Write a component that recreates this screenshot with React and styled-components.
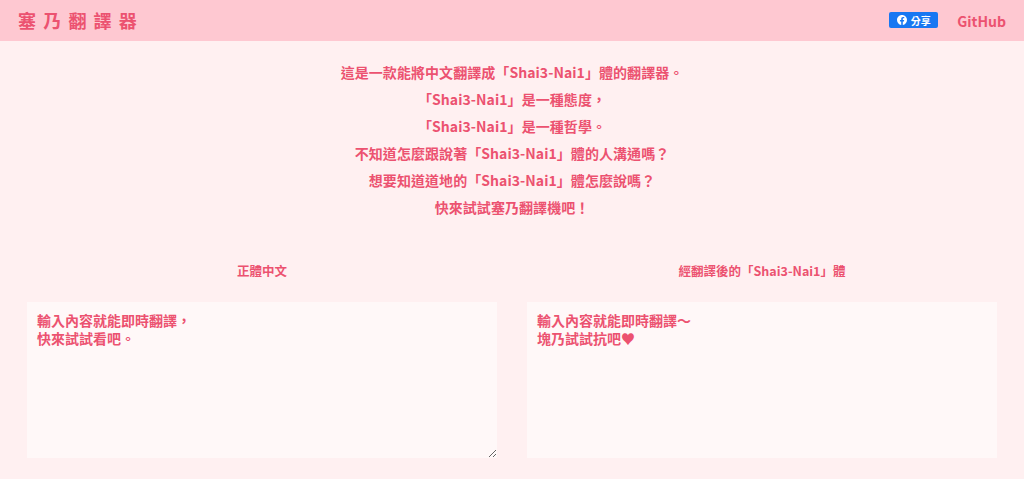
import React from "react";
import styled, { createGlobalStyle } from "styled-components";

const GlobalStyle = createGlobalStyle`
  html, body {
    margin: 0;
    padding: 0;
    background: #fff0f1;
    font-family: "Noto Sans CJK TC", "Noto Sans", sans-serif;
    color: #ec5270;
  }
  * {
    box-sizing: border-box;
  }
`;

const intro = [
  "這是一款能將中文翻譯成「Shai3-Nai1」體的翻譯器。",
  "「Shai3-Nai1」是一種態度，",
  "「Shai3-Nai1」是一種哲學。",
  "不知道怎麼跟說著「Shai3-Nai1」體的人溝通嗎？",
  "想要知道道地的「Shai3-Nai1」體怎麼說嗎？",
  "快來試試塞乃翻譯機吧！",
];

export default function App() {
  return (
    <Page>
      <GlobalStyle />
      <Header>
        <Title>塞乃翻譯器</Title>
        <HeaderRight>
          <ShareButton>
            <svg width="10" height="10" viewBox="0 0 16 16" fill="#fff">
              <path d="M16 8.05C16 3.6 12.42 0 8 0S0 3.6 0 8.05c0 4.02 2.93 7.35 6.75 7.95v-5.62H4.72V8.05h2.03V6.27c0-2.02 1.19-3.13 3.02-3.13.88 0 1.8.16 1.8.16v1.98h-1.01c-1 0-1.31.62-1.31 1.26v1.51h2.22l-.35 2.33H9.25V16C13.07 15.4 16 12.07 16 8.05z" />
            </svg>
            分享
          </ShareButton>
          <GithubLink href="#">GitHub</GithubLink>
        </HeaderRight>
      </Header>
      <Intro>
        {intro.map((line) => (
          <IntroLine key={line}>{line}</IntroLine>
        ))}
      </Intro>
      <Columns>
        <Column>
          <Label>正體中文</Label>
          <Input defaultValue={"輸入內容就能即時翻譯，\n快來試試看吧。"} />
        </Column>
        <Column>
          <Label>經翻譯後的「Shai3-Nai1」體</Label>
          <Output>
            輸入內容就能即時翻譯～
            <br />
            塊乃試試抗吧♥
          </Output>
        </Column>
      </Columns>
    </Page>
  );
}

const Page = styled.div`
  height: 479px;
  overflow: hidden;
`;

const Header = styled.header`
  height: 41px;
  background: #fec8d1;
  display: flex;
  align-items: center;
  justify-content: space-between;
  padding: 0 18px;
`;

const Title = styled.h1`
  margin: 0;
  font-size: 18px;
  font-weight: 700;
  letter-spacing: 7.2px;
  line-height: 41px;
`;

const HeaderRight = styled.div`
  display: flex;
  align-items: center;
  gap: 19px;
`;

const ShareButton = styled.a`
  width: 49px;
  height: 16px;
  margin-bottom: 1px;
  background: #1877f2;
  border-radius: 2px;
  color: #fff;
  font-size: 10px;
  font-weight: 700;
  display: flex;
  align-items: center;
  justify-content: center;
  gap: 4px;
`;

const GithubLink = styled.a`
  color: #ec5270;
  font-size: 14px;
  font-weight: 700;
  text-decoration: none;
`;

const Intro = styled.section`
  padding-top: 18px;
  text-align: center;
`;

const IntroLine = styled.p`
  margin: 0;
  font-size: 14px;
  font-weight: 700;
  line-height: 27px;
  letter-spacing: 0.06px;
`;

const Columns = styled.section`
  display: grid;
  grid-template-columns: 470px 470px;
  gap: 30px;
  padding: 40px 27px 0;
`;

const Column = styled.div`
  display: flex;
  flex-direction: column;
`;

const Label = styled.h2`
  margin: 0 0 21px;
  height: 20px;
  font-size: 12.5px;
  font-weight: 700;
  line-height: 20px;
  text-align: center;
`;

const Input = styled.textarea`
  display: block;
  width: 470px;
  height: 156px;
  padding: 9px 10px;
  border: none;
  outline: none;
  background: #fff8f8;
  color: #ec5270;
  font-family: inherit;
  font-size: 14px;
  font-weight: 700;
  line-height: 18px;
`;

const Output = styled.div`
  height: 156px;
  padding: 9px 10px;
  background: #fff8f8;
  font-size: 14px;
  font-weight: 700;
  line-height: 18px;
`;
